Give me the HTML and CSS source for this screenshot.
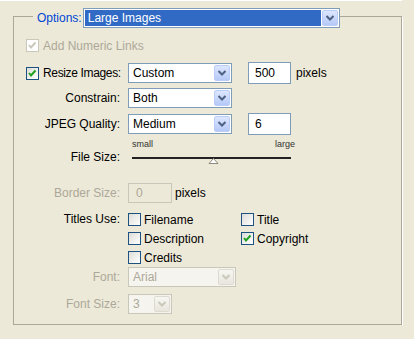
FILE: index.html
```html
<!DOCTYPE html>
<html lang="en">
<head>
    <meta charset="UTF-8">
    <title>Options</title>
    <link rel="stylesheet" href="styles.css">
</head>
<body>
    <div class="top-edge"></div>
    <div class="group">
        <div class="legend">
            <span class="legend-label">Options:</span>
            <div class="combo combo-wide combo-focus">
                <span class="combo-value">Large Images</span>
                <span class="combo-btn">
                    <svg width="16" height="16" viewBox="0 0 16 16"><polyline points="4.5,6 8,9.5 11.5,6" /></svg>
                </span>
            </div>
        </div>

        <div class="numeric-row disabled">
            <span class="check check-off checked">
                <svg width="11" height="11" viewBox="0 0 11 11"><polyline points="2,5 4,7.5 8.5,2.5" /></svg>
            </span>
            <span>Add Numeric Links</span>
        </div>

        <div class="field field-resize">
            <div class="field-label">
                <span class="check checked">
                    <svg width="11" height="11" viewBox="0 0 11 11"><polyline points="2,5 4,7.5 8.5,2.5" /></svg>
                </span>
                <span class="resize-text">Resize Images:</span>
            </div>
            <div class="field-control">
                <div class="combo combo-mid">
                    <span class="combo-value">Custom</span>
                    <span class="combo-btn">
                        <svg width="16" height="16" viewBox="0 0 16 16"><polyline points="4.5,6 8,9.5 11.5,6" /></svg>
                    </span>
                </div>
                <div class="textbox">500</div>
                <span class="unit">pixels</span>
            </div>
        </div>

        <div class="field field-constrain">
            <div class="field-label">Constrain:</div>
            <div class="field-control">
                <div class="combo combo-mid">
                    <span class="combo-value">Both</span>
                    <span class="combo-btn">
                        <svg width="16" height="16" viewBox="0 0 16 16"><polyline points="4.5,6 8,9.5 11.5,6" /></svg>
                    </span>
                </div>
            </div>
        </div>

        <div class="field field-quality">
            <div class="field-label">JPEG Quality:</div>
            <div class="field-control">
                <div class="combo combo-mid">
                    <span class="combo-value">Medium</span>
                    <span class="combo-btn">
                        <svg width="16" height="16" viewBox="0 0 16 16"><polyline points="4.5,6 8,9.5 11.5,6" /></svg>
                    </span>
                </div>
                <div class="textbox">6</div>
            </div>
        </div>

        <div class="field field-scale">
            <div class="field-label"></div>
            <div class="scale-labels">
                <span>small</span>
                <span>large</span>
            </div>
        </div>

        <div class="field field-size">
            <div class="field-label">File Size:</div>
            <div class="slider">
                <div class="slider-line"></div>
                <svg class="slider-thumb" width="11" height="6" viewBox="0 0 11 6"><polygon points="5.5,0.5 10,5.5 1,5.5" /></svg>
            </div>
        </div>

        <div class="field field-border disabled">
            <div class="field-label">Border Size:</div>
            <div class="field-control">
                <div class="textbox textbox-small textbox-off">0</div>
                <span class="unit unit-dark">pixels</span>
            </div>
        </div>

        <div class="field field-titles">
            <div class="field-label">Titles Use:</div>
            <div class="titles-grid">
                <label class="check-item"><span class="check"></span>Filename</label>
                <label class="check-item"><span class="check"></span>Title</label>
                <label class="check-item"><span class="check"></span>Description</label>
                <label class="check-item">
                    <span class="check checked">
                        <svg width="11" height="11" viewBox="0 0 11 11"><polyline points="2,5 4,7.5 8.5,2.5" /></svg>
                    </span>Copyright
                </label>
                <label class="check-item"><span class="check"></span>Credits</label>
            </div>
        </div>

        <div class="field field-font disabled">
            <div class="field-label">Font:</div>
            <div class="field-control">
                <div class="combo combo-font combo-off">
                    <span class="combo-value">Arial</span>
                    <span class="combo-btn">
                        <svg width="16" height="16" viewBox="0 0 16 16"><polyline points="4.5,6 8,9.5 11.5,6" /></svg>
                    </span>
                </div>
            </div>
        </div>

        <div class="field field-fontsize disabled">
            <div class="field-label">Font Size:</div>
            <div class="field-control">
                <div class="combo combo-small combo-off">
                    <span class="combo-value">3</span>
                    <span class="combo-btn">
                        <svg width="16" height="16" viewBox="0 0 16 16"><polyline points="4.5,6 8,9.5 11.5,6" /></svg>
                    </span>
                </div>
            </div>
        </div>
    </div>
</body>
</html>
```

FILE: styles.css
```css
body {
    margin: 0;
    background-color: #ECE9D8;
    font-family: 'Liberation Sans', Arial, sans-serif;
    font-size: 12px;
    color: #000;
}

.top-edge {
    width: 402px;
    height: 1px;
    background-color: #fff;
}

.group {
    box-sizing: border-box;
    width: 389px;
    height: 309px;
    margin: 15px 0 0 13px;
    border: 1px solid #ACA899;
    box-shadow: 1px 1px 0 #fff;
}

.legend {
    display: flex;
    align-items: center;
    width: fit-content;
    height: 20px;
    margin: -9px 0 0 19px;
    padding-left: 4px;
    background-color: #ECE9D8;
}

.legend-label {
    color: #0046D5;
    margin-right: 1px;
}

/* combo boxes */
.combo {
    box-sizing: border-box;
    display: flex;
    height: 20px;
    padding: 1px;
    border: 1px solid #7F9DB9;
    background-color: #fff;
}

.combo-wide { width: 257px; }
.combo-mid { width: 104px; }
.combo-font { width: 108px; }
.combo-small { width: 44px; }

.combo-value {
    flex: 1;
    line-height: 16px;
    padding-left: 3px;
    white-space: nowrap;
}

.combo-focus .combo-value {
    background-color: #316AC5;
    color: #fff;
    margin-right: 1px;
}

.combo-btn {
    box-sizing: border-box;
    width: 16px;
    height: 16px;
    border: 1px solid #B9CDF8;
    border-radius: 2px;
    background: linear-gradient(#DCE6FE, #B6C9F7);
}

.combo-btn svg {
    display: block;
    margin: -1px;
    fill: none;
    stroke: #4D6185;
    stroke-width: 2;
}

.combo-off {
    border-color: #C9C7BA;
    background-color: #F5F4EE;
}

.combo-off .combo-btn {
    border-color: #DDDBD1;
    background: linear-gradient(#F7F6F1, #E8E6DD);
}

.combo-off .combo-btn svg {
    stroke: #CAC8BB;
}

/* text boxes */
.textbox {
    box-sizing: border-box;
    width: 43px;
    height: 22px;
    margin-left: 16px;
    padding-left: 6px;
    border: 1px solid #7F9DB9;
    background-color: #fff;
    line-height: 20px;
}

.textbox-small {
    width: 44px;
    height: 20px;
    margin-left: 0;
    padding-left: 7px;
    line-height: 18px;
}

.textbox-off {
    border-color: #C9C7BA;
    background-color: #ECE9D8;
}

.unit {
    margin-left: 5px;
}

.unit-dark {
    margin-left: 3px;
    color: #000;
}

/* checkboxes */
.check {
    box-sizing: border-box;
    display: inline-block;
    width: 13px;
    height: 13px;
    border: 1px solid #1C5180;
    background: linear-gradient(135deg, #DCDCD7, #fff);
    flex-shrink: 0;
}

.check svg {
    display: block;
    fill: none;
    stroke: #21A121;
    stroke-width: 2;
}

.check-off {
    border-color: #CAC8BB;
    background: #fff;
}

.check-off svg {
    stroke: #CAC8BB;
}

.disabled {
    color: #ACA899;
}

.numeric-row {
    display: flex;
    align-items: center;
    gap: 4px;
    height: 13px;
    margin-top: 11px;
    padding-left: 12px;
}

/* form rows */
.field {
    display: grid;
    grid-template-columns: 106px 1fr;
    column-gap: 8px;
    align-items: center;
    height: 22px;
}

.field-label {
    display: flex;
    align-items: center;
    justify-content: flex-end;
    gap: 4px;
    white-space: nowrap;
}

.field-resize .field-label {
    justify-content: space-between;
    padding-left: 12px;
}

.resize-text {
    letter-spacing: -0.35px;
}

.field-control {
    display: flex;
    align-items: center;
}

.field-resize { margin-top: 10px; }
.field-constrain { margin-top: 3px; }
.field-quality { margin-top: 4px; }

.field-scale {
    height: 11px;
    margin-top: 4px;
}

.scale-labels {
    display: flex;
    justify-content: space-between;
    width: 163px;
    padding-left: 4px;
    font-size: 9px;
    line-height: 11px;
    color: #333;
}

.field-size {
    height: 14px;
    align-items: start;
}

.field-size .field-label {
    line-height: 14px;
}

.slider {
    width: 159px;
    margin: 7px 0 0 4px;
}

.slider-line {
    height: 2px;
    background-color: #222;
}

.slider-thumb {
    display: block;
    margin: -1px 0 0 76px;
    fill: #fff;
    stroke: #8E8B7E;
    stroke-width: 1;
}

.field-border { margin-top: 18px; }

.field-titles {
    height: 57px;
    margin-top: 6px;
    align-items: start;
}

.field-titles .field-label {
    line-height: 19px;
}

.titles-grid {
    display: grid;
    grid-template-columns: 113px auto;
    grid-auto-rows: 19px;
}

.check-item {
    display: flex;
    align-items: center;
    gap: 3px;
}

.field-font { margin-top: -1px; }
.field-fontsize { margin-top: 5px; }
```
